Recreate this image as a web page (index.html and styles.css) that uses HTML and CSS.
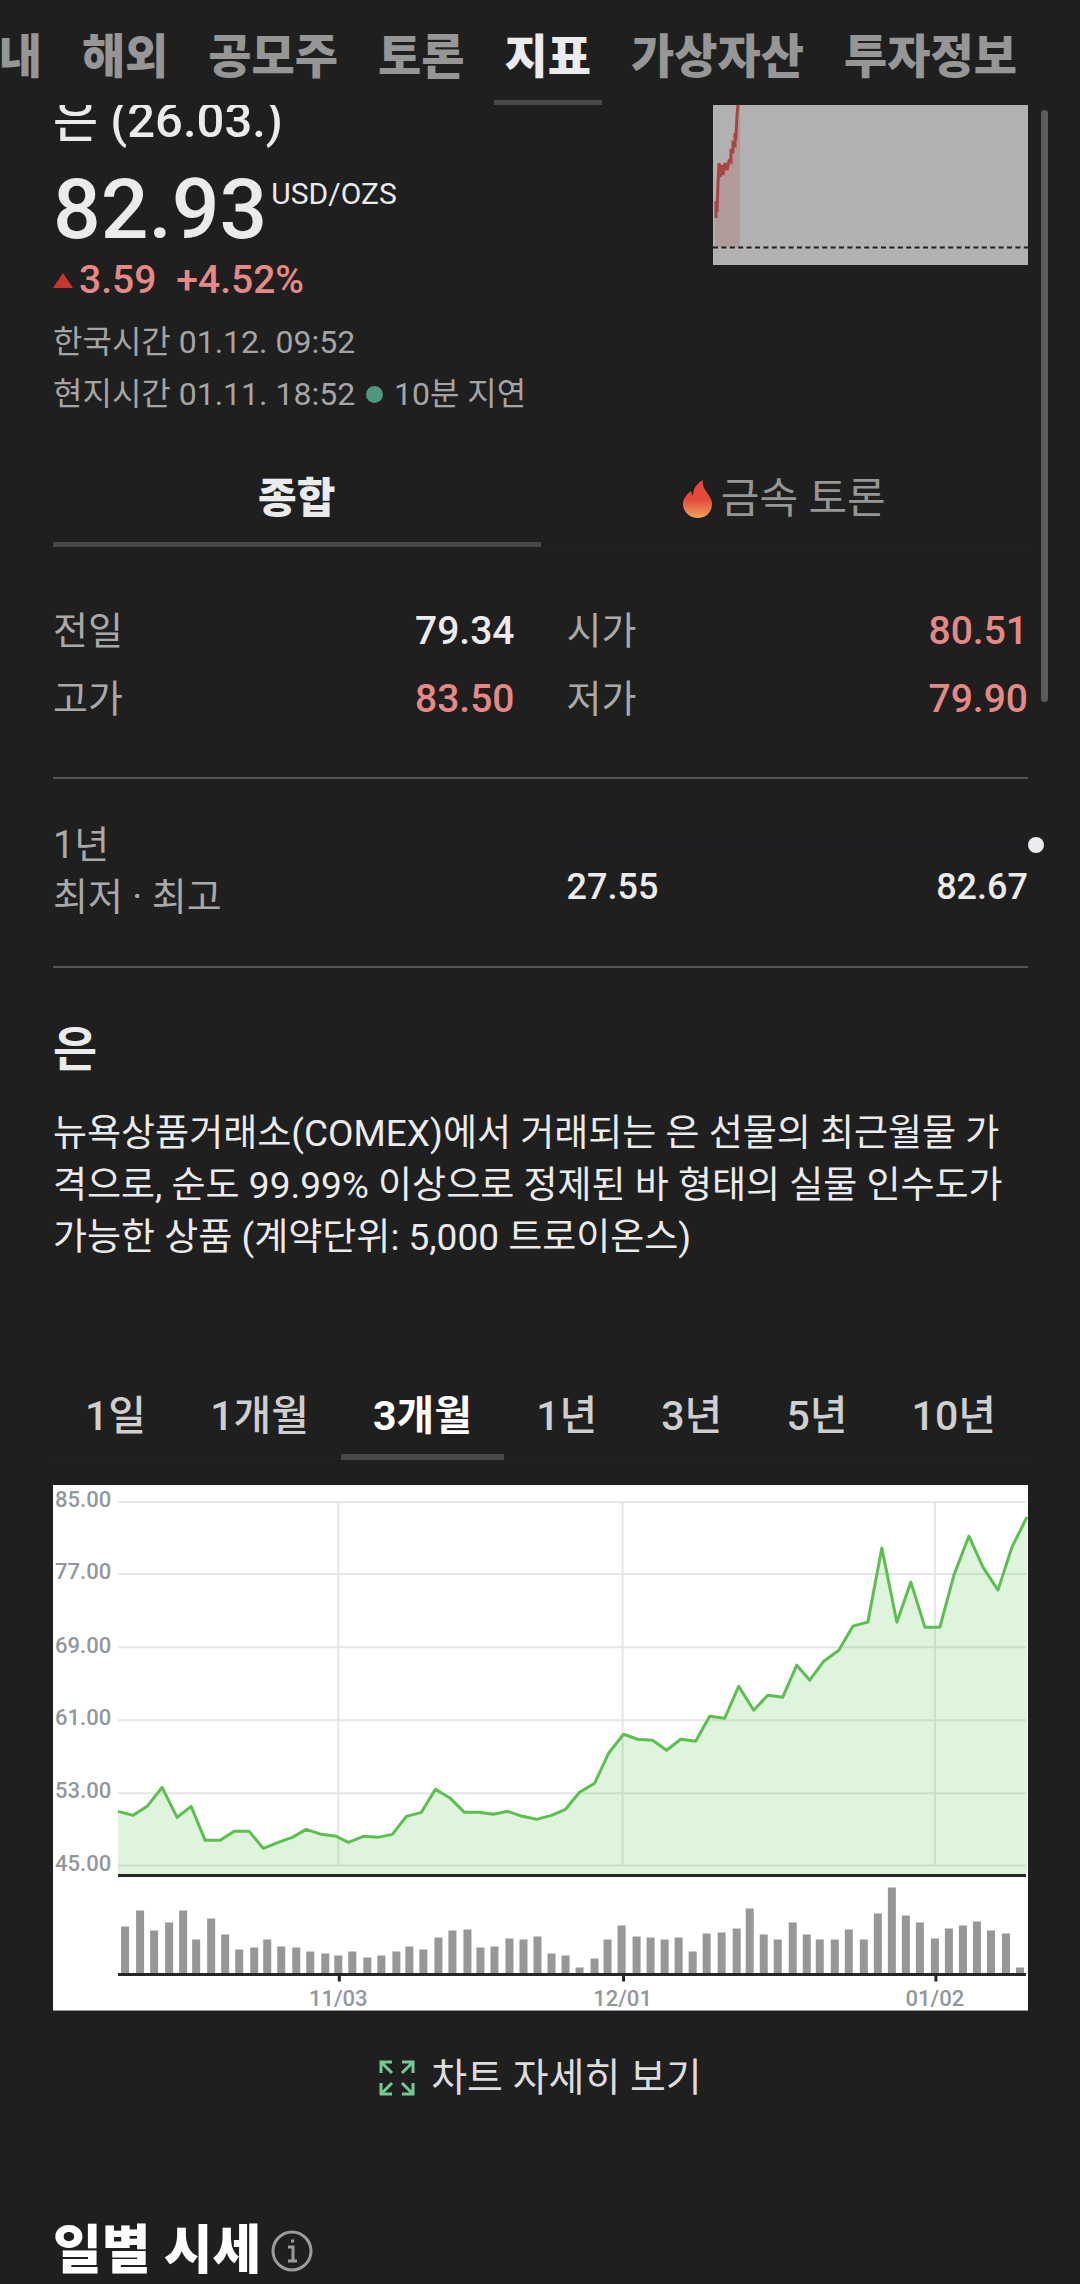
FILE: index.html
```html
<!DOCTYPE html>
<html lang="ko">

<head>
  <meta charset="UTF-8">
  <meta name="viewport" content="width=device-width, initial-scale=1.0">
  <title>은 (26.03.) - 지표</title>
  <link rel="stylesheet" href="styles.css">
</head>

<body>

  <header class="header">
    <nav class="menu">
      <a href="#">국내</a>
      <a href="#">해외</a>
      <a href="#">공모주</a>
      <a href="#">토론</a>
      <a href="#" class="active">지표</a>
      <a href="#">가상자산</a>
      <a href="#">투자정보</a>
    </nav>
  </header>

  <div class="scroll-thumb"></div>

  <main>
    <section class="quote">
      <div class="quote-info">
        <h1>은 (26.03.)</h1>
        <div class="price"><strong>82.93</strong><span class="unit">USD/OZS</span></div>
        <div class="change">
          <svg width="20" height="15" viewBox="0 0 20 15"><path d="M10 0L20 15H0Z" fill="#c8352a"/></svg>
          <span class="diff">3.59</span>
          <span>+4.52%</span>
        </div>
        <div class="time">
          <p>한국시간 01.12. 09:52</p>
          <p>현지시간 01.11. 18:52 <span class="dot"></span> 10분 지연</p>
        </div>
      </div>
      <svg class="mini-chart" viewBox="0 0 315 160">
        <rect width="315" height="160" fill="#b1b1b1"/>
        <path d="M2 113L3 98L5 80L6 60L14 60L18 44L22 32L24 0H27V142H2Z" fill="#b09a9a"/>
        <path d="M3 113V96L4 107L5 78L6 58L7 72L9 60L10 70L12 58L14 65L16 56L18 57V44L20 48V38L22 40V28L23 30L24 10L25 0" fill="none" stroke="#a84442" stroke-width="3"/>
        <path d="M0 142.500H315" stroke="#1f1f1f" stroke-width="2" stroke-dasharray="5 3.400"/>
      </svg>
    </section>

    <div class="tabs">
      <button type="button" class="active">종합</button>
      <button type="button">
        <svg width="30" height="40" viewBox="0 0 30 40">
          <defs>
            <linearGradient id="fire" x1="0" y1="0" x2="0" y2="1">
              <stop offset="0.500" stop-color="#e5493b"/>
              <stop offset="1" stop-color="#f0a35c"/>
            </linearGradient>
          </defs>
          <path d="M20 1C13 5 10 10 10 17C9 15 8 13 8 12C3 16 0 20 0 25C0 33 7 39 15 39C23 39 29 33 29 25C29 15 18 12 20 1Z" fill="url(#fire)"/>
        </svg>금속 토론
      </button>
    </div>

    <dl class="summary">
      <div><dt>전일</dt><dd>79.34</dd></div>
      <div><dt>시가</dt><dd class="up">80.51</dd></div>
      <div><dt>고가</dt><dd class="up">83.50</dd></div>
      <div><dt>저가</dt><dd class="up">79.90</dd></div>
    </dl>

    <section class="range">
      <p class="range-label">1년<br>최저 · 최고</p>
      <div class="range-graph">
        <div class="range-bar"><span class="range-dot"></span></div>
        <div class="range-value"><span>27.55</span><span>82.67</span></div>
      </div>
    </section>

    <section class="about">
      <h2>은</h2>
      <p>뉴욕상품거래소(COMEX)에서 거래되는 은 선물의 최근월물 가격으로, 순도 99.99% 이상으로 정제된 바 형태의 실물 인수도가 가능한 상품 (계약단위: 5,000 트로이온스)</p>
    </section>

    <div class="divider"></div>

    <section class="chart">
      <div class="period">
        <button type="button">1일</button>
        <button type="button">1개월</button>
        <button type="button" class="active">3개월</button>
        <button type="button">1년</button>
        <button type="button">3년</button>
        <button type="button">5년</button>
        <button type="button">10년</button>
      </div>

      <svg class="chart-graph" viewBox="0 0 974 525">
        <rect width="974" height="525" fill="#fff"/>
        <path class="grid" d="M65 17H972M65 89H972M65 162H972M65 235H972M65 308H972M65 380H972M285 17V380M569 17V380M881 17V380"/>
        <path class="area" d="M65 326L80 330L94 321L109 302L124 332L138 321L152 355L167 355L181 346L196 346L210 363L225 357L239 352L253 344L268 349L283 351L295 357L310 351L324 352L339 349L353 331L368 327L382 304L397 313L411 327L425 327L440 329L454 326L469 331L483 334L498 330L512 324L526 307L541 298L555 268L570 249L584 254L599 255L613 265L627 254L642 256L656 231L671 233L685 201L700 225L714 210L729 212L743 180L756 195L770 176L785 165L799 141L814 137L828 63L843 137L857 97L871 142L886 142L900 90L915 51L929 82L944 105L958 62L973 32V390H65Z"/>
        <path class="line" d="M65 326L80 330L94 321L109 302L124 332L138 321L152 355L167 355L181 346L196 346L210 363L225 357L239 352L253 344L268 349L283 351L295 357L310 351L324 352L339 349L353 331L368 327L382 304L397 313L411 327L425 327L440 329L454 326L469 331L483 334L498 330L512 324L526 307L541 298L555 268L570 249L584 254L599 255L613 265L627 254L642 256L656 231L671 233L685 201L700 225L714 210L729 212L743 180L756 195L770 176L785 165L799 141L814 137L828 63L843 137L857 97L871 142L886 142L900 90L915 51L929 82L944 105L958 62L973 32"/>
        <path class="volume" d="M72 488V441M87 488V425M101 488V445M116 488V437M130 488V425M143 488V454M158 488V433M172 488V449M186 488V464M201 488V462M214 488V454M228 488V461M243 488V462M257 488V466M272 488V468M285 488V470M299 488V466M314 488V472M328 488V470M343 488V466M356 488V461M370 488V464M385 488V452M399 488V445M414 488V444M427 488V462M441 488V461M456 488V453M470 488V454M484 488V451M498 488V468M512 488V470M526 488V482M541 488V473M554 488V454M568 488V440M583 488V451M597 488V452M611 488V454M625 488V452M639 488V466M653 488V448M668 488V447M683 488V443M696 488V423M710 488V449M724 488V454M739 488V437M753 488V449M766 488V454M781 488V454M795 488V444M810 488V454M824 488V428M838 488V402M852 488V430M866 488V437M881 488V453M895 488V443M909 488V440M923 488V436M937 488V445M952 488V448M966 488V482"/>
        <path class="axis" d="M65 390H972M65 489H972M286 489V496M570 489V496M882 489V496"/>
        <g class="label">
          <text x="2" y="22">85.00</text>
          <text x="2" y="94">77.00</text>
          <text x="2" y="168">69.00</text>
          <text x="2" y="240">61.00</text>
          <text x="2" y="313">53.00</text>
          <text x="2" y="386">45.00</text>
        </g>
        <g class="label date">
          <text x="285" y="520">11/03</text>
          <text x="569" y="520">12/01</text>
          <text x="881" y="520">01/02</text>
        </g>
      </svg>

      <a href="#" class="chart-more">
        <svg width="36" height="36" viewBox="0 0 36 36" fill="none" stroke="#72cc90" stroke-width="3">
          <path d="M13 2H2V13M2 2L13 13M23 2H34V13M34 2L23 13M13 34H2V23M2 34L13 23M23 34H34V23M34 34L23 23"/>
        </svg>차트 자세히 보기
      </a>
    </section>

    <div class="divider"></div>

    <section class="daily">
      <h2>일별 시세</h2>
      <button type="button" class="info" aria-label="안내">
        <svg width="42" height="42" viewBox="0 0 42 42" fill="none" stroke="#9b9b9b" stroke-width="3">
          <circle cx="21" cy="21" r="19"/>
          <path d="M17 17H22V31M17 31H26M20 11H23"/>
        </svg>
      </button>
    </section>
  </main>

</body>
</html>
```

FILE: styles.css
```css
* {
  box-sizing: border-box;
}

body {
  position: relative;
  font-family: Roboto, "Noto Sans CJK KR", sans-serif;
  background-color: #1f1f1f;
  color: #ebebed;
  margin: 0;
  padding: 0;
}

h1,
h2,
p,
dl,
dd {
  margin: 0;
}

a {
  color: inherit;
  text-decoration: none;
}

button {
  font-family: inherit;
  background: none;
  color: inherit;
  border: none;
  padding: 0;
  cursor: pointer;
}

svg {
  flex-shrink: 0;
}

.header {
  position: sticky;
  top: 0;
  z-index: 10;
  background-color: #1f1f1f;
}

.menu {
  display: flex;
  justify-content: flex-end;
  gap: 18px;
  padding: 29px 52px 0;
  overflow: hidden;
}

.menu a {
  flex-shrink: 0;
  padding: 0 11px 15px;
  border-bottom: 5px solid transparent;
  font-size: 47px;
  line-height: 56px;
  font-weight: 900;
  color: #969697;
}

.menu a.active {
  color: #ebebed;
  border-color: #48484c;
}

.scroll-thumb {
  position: absolute;
  top: 110px;
  right: 32px;
  width: 7px;
  height: 592px;
  border-radius: 4px;
  background-color: #5b5b5b;
}

main {
  padding: 0 52px 0 53px;
}

/* quote */
.quote {
  display: flex;
  justify-content: space-between;
  align-items: flex-start;
}

/* the title is half scrolled under the header */
.quote-info {
  margin-top: -14px;
}

h1 {
  font-size: 49px;
  line-height: 60px;
  font-weight: 500;
}

.price {
  display: flex;
  align-items: flex-start;
  gap: 4px;
  margin-top: 13px;
}

.price strong {
  font-size: 84px;
  line-height: 92px;
  font-weight: 500;
}

.unit {
  margin-top: 8px;
  font-size: 30px;
  line-height: 44px;
}

.change {
  display: flex;
  align-items: center;
  font-size: 39px;
  line-height: 48px;
  font-weight: 500;
  color: #e58987;
}

.diff {
  margin: 0 20px 0 6px;
}

.time {
  margin-top: 12px;
  font-size: 32px;
  line-height: 52px;
  color: #a5a5a5;
}

.dot {
  display: inline-block;
  width: 17px;
  height: 17px;
  margin: 0 3px;
  border-radius: 50%;
  vertical-align: 2px;
  background-color: #519680;
}

.mini-chart {
  width: 315px;
  height: 160px;
}

/* tabs */
.tabs {
  display: flex;
  margin-top: 36px;
  border-bottom: 1px solid #232325;
}

.tabs button {
  flex: 1;
  display: flex;
  justify-content: center;
  align-items: center;
  gap: 8px;
  margin-bottom: -1px;
  padding: 13px 0;
  border-bottom: 5px solid transparent;
  font-size: 42px;
  line-height: 60px;
  color: #969696;
}

.tabs .active {
  font-weight: 900;
  color: #ebebed;
  border-color: #48484c;
}

/* summary */
.summary {
  display: grid;
  grid-template-columns: 1fr 1fr;
  gap: 16px 52px;
  padding: 58px 0 52px;
  border-bottom: 2px solid #555;
}

.summary div {
  display: flex;
  justify-content: space-between;
  align-items: baseline;
  line-height: 52px;
}

.summary dt {
  font-size: 38px;
  color: #a9a9a9;
}

.summary dd {
  font-size: 39px;
  font-weight: 500;
}

.summary .up {
  color: #e58987;
}

.range {
  display: grid;
  grid-template-columns: 1fr 1fr;
  gap: 52px;
  padding: 40px 0 43px;
  border-bottom: 2px solid #555;
}

.range-label {
  font-size: 38px;
  line-height: 52px;
  color: #a9a9a9;
}

.range-bar {
  position: relative;
  height: 8px;
  margin: 22px 0 18px;
  background-color: #1d1d21;
}

.range-dot {
  position: absolute;
  top: -4px;
  left: 100%;
  width: 16px;
  height: 16px;
  border-radius: 50%;
  background-color: #ebebed;
}

.range-value {
  display: flex;
  justify-content: space-between;
  font-size: 36px;
  line-height: 40px;
  font-weight: 500;
}

.about {
  padding: 52px 0 43px;
}

.about h2 {
  font-size: 48px;
  line-height: 60px;
}

.about p {
  margin-top: 28px;
  font-size: 37px;
  line-height: 52px;
}

.divider {
  height: 18px;
  margin: 0 -52px 0 -53px;
  background-color: #1d1e20;
}

/* chart */
.chart {
  padding: 65px 0 43px;
}

.period {
  display: flex;
  justify-content: space-between;
  border-bottom: 1px solid #232325;
}

.period button {
  margin-bottom: -1px;
  padding: 0 32px 12px;
  border-bottom: 6px solid transparent;
  font-size: 41px;
  line-height: 52px;
  font-weight: 500;
  color: #cfcfcf;
  white-space: nowrap;
}

.period .active {
  font-weight: bold;
  color: #fff;
  border-color: #48484c;
}

.chart-graph {
  display: block;
  width: 100%;
  margin-top: 25px;
}

.grid {
  stroke: #e4e6e8;
  stroke-width: 2;
}

.area {
  fill: #5ac850;
  fill-opacity: 0.2;
}

.line {
  fill: none;
  stroke: #5cbf50;
  stroke-width: 3;
  stroke-linejoin: round;
}

.volume {
  stroke: #979797;
  stroke-width: 8;
}

.axis {
  stroke: #262626;
  stroke-width: 3;
}

.label {
  font-size: 22px;
  font-weight: 500;
  fill: #92979c;
}

.date {
  text-anchor: middle;
}

.chart-more {
  display: flex;
  justify-content: center;
  align-items: center;
  gap: 16px;
  margin-top: 41px;
  font-size: 39px;
  line-height: 52px;
  color: #dddde0;
}

/* daily */
.daily {
  display: flex;
  align-items: center;
  gap: 10px;
  padding-top: 54px;
}

.daily h2 {
  font-size: 53px;
  line-height: 64px;
  font-weight: 900;
  color: #fff;
}

.info svg {
  display: block;
}
```
